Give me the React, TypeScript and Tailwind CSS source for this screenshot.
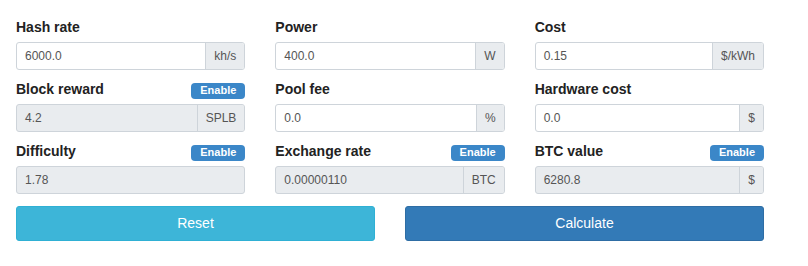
import React from "react"

type Field = {
  label: string
  value: string
  unit?: string
  disabled?: boolean
  toggle?: boolean
}

const fields: Field[] = [
  { label: "Hash rate", value: "6000.0", unit: "kh/s" },
  { label: "Power", value: "400.0", unit: "W" },
  { label: "Cost", value: "0.15", unit: "$/kWh" },
  { label: "Block reward", value: "4.2", unit: "SPLB", disabled: true, toggle: true },
  { label: "Pool fee", value: "0.0", unit: "%" },
  { label: "Hardware cost", value: "0.0", unit: "$" },
  { label: "Difficulty", value: "1.78", disabled: true, toggle: true },
  { label: "Exchange rate", value: "0.00000110", unit: "BTC", disabled: true, toggle: true },
  { label: "BTC value", value: "6280.8", unit: "$", disabled: true, toggle: true },
]

const FieldBox = ({ label, value, unit, disabled, toggle }: Field) => {
  return (
    <div className="flex flex-col gap-[5px]">
      <div className="flex h-5 items-center justify-between">
        <span className="text-[14px] font-bold text-[#222]">{label}</span>
        {toggle && (
          <span className="mt-[3px] flex h-4 w-[54px] items-center justify-center rounded-[4px] bg-[#3b87c8] text-[11px] font-bold leading-none text-white">
            Enable
          </span>
        )}
      </div>
      <div
        className={`flex h-[28px] overflow-hidden rounded-[3px] border border-[#ced4da] text-[12px] text-[#555] ${
          disabled ? "bg-[#e9ecef]" : "bg-white"
        }`}
      >
        <div className="flex flex-1 items-center pl-[8px]">{value}</div>
        {unit && (
          <div className="flex items-center border-l border-[#ced4da] bg-[#e9ecef] px-[8px]">
            {unit}
          </div>
        )}
      </div>
    </div>
  )
}

export default function App() {
  return (
    <div
      className="h-[266px] w-[808px] bg-white pl-4 pt-[17px]"
      style={{ fontFamily: '"Liberation Sans", Arial, sans-serif' }}
    >
      <div className="w-[748px]">
        <div className="grid grid-cols-3 gap-x-[30px] gap-y-[9px]">
          {fields.map((f) => (
            <FieldBox key={f.label} {...f} />
          ))}
        </div>
        <div className="mt-3 grid grid-cols-2 gap-x-[30px]">
          <button className="h-[35px] rounded-[3px] border border-[#2fb0d4] bg-[#3db5d8] text-[14px] text-white">
            Reset
          </button>
          <button className="h-[35px] rounded-[3px] border border-[#2e6da4] bg-[#337ab7] text-[14px] text-white">
            Calculate
          </button>
        </div>
      </div>
    </div>
  )
}
